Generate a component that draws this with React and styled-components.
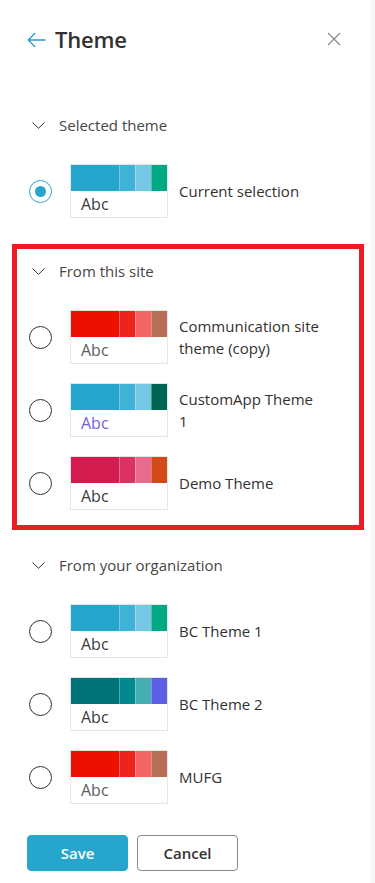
import React, { useState } from 'react';
import styled, { createGlobalStyle } from 'styled-components';

const GlobalStyle = createGlobalStyle`
  html, body {
    margin: 0;
    padding: 0;
    background: #f8f8f8;
  }
  body {
    font-family: "Open Sans", "Noto Sans", "Liberation Sans", sans-serif;
    color: #323130;
  }
`;

const blue = ['#27a6cd', '#40b1d7', '#76c7e3'];

const sections = [
  {
    title: 'Selected theme',
    items: [
      { id: 'current', name: 'Current selection', colors: [...blue, '#00a884'], ink: '#3b3a39' },
    ],
  },
  {
    title: 'From this site',
    highlight: true,
    items: [
      { id: 'comm', name: 'Communication site theme (copy)', colors: ['#eb1000', '#ee231d', '#f46464', '#b76e55'], ink: '#605e5c' },
      { id: 'custom', name: 'CustomApp Theme 1', colors: [...blue, '#006452'], ink: '#7160e8' },
      { id: 'demo', name: 'Demo Theme', colors: ['#d31b4f', '#db3264', '#e86a8c', '#d24a18'], ink: '#3b3a39' },
    ],
  },
  {
    title: 'From your organization',
    items: [
      { id: 'bc1', name: 'BC Theme 1', colors: [...blue, '#00a884'], ink: '#3b3a39' },
      { id: 'bc2', name: 'BC Theme 2', colors: ['#007378', '#008a8f', '#45aeb1', '#5c5fe6'], ink: '#3b3a39' },
      { id: 'mufg', name: 'MUFG', colors: ['#eb1000', '#ee231d', '#f46464', '#b76e55'], ink: '#605e5c' },
    ],
  },
];

function ThemeRow({ item, checked, onSelect }) {
  return (
    <Row onClick={() => onSelect(item.id)}>
      <Radio $checked={checked} />
      <Swatch>
        <Bar>
          {item.colors.map((c, i) => (
            <Segment key={i} $color={c} $main={i === 0} />
          ))}
        </Bar>
        <Sample $ink={item.ink}>Abc</Sample>
      </Swatch>
      <Label>{item.name}</Label>
    </Row>
  );
}

function Section({ section, selected, onSelect }) {
  return (
    <>
      <SectionHeader>
        <svg width="13" height="7" viewBox="0 0 13 7">
          <polyline points="0.5,0.5 6.5,6.3 12.5,0.5" fill="none" stroke="#323130" strokeWidth="1" />
        </svg>
        <span>{section.title}</span>
      </SectionHeader>
      <Rows>
        {section.items.map((item) => (
          <ThemeRow key={item.id} item={item} checked={selected === item.id} onSelect={onSelect} />
        ))}
      </Rows>
    </>
  );
}

export default function App() {
  const [selected, setSelected] = useState('current');

  return (
    <>
      <GlobalStyle />
      <Panel>
        <Header>
          <TitleGroup>
            <svg width="19" height="16" viewBox="0 0 19 16">
              <path d="M18.5 8H1.2M8.2 1L1.2 8l7 7" fill="none" stroke="#27a0cc" strokeWidth="1.3" />
            </svg>
            <Title>Theme</Title>
          </TitleGroup>
          <svg width="14" height="14" viewBox="0 0 14 14">
            <path d="M1 1l12 12M13 1L1 13" fill="none" stroke="#8a8886" strokeWidth="1.2" />
          </svg>
        </Header>

        {sections.map((s) =>
          s.highlight ? (
            <Highlight key={s.title}>
              <Section section={s} selected={selected} onSelect={setSelected} />
            </Highlight>
          ) : (
            <Block key={s.title}>
              <Section section={s} selected={selected} onSelect={setSelected} />
            </Block>
          )
        )}

        <Actions>
          <Button $primary>Save</Button>
          <Button>Cancel</Button>
        </Actions>
      </Panel>
    </>
  );
}

const Panel = styled.div`
  width: 370px;
  min-height: 883px;
  box-sizing: border-box;
  padding: 24px 17px 12px 27px;
  background: #ffffff;
`;

const Header = styled.div`
  display: flex;
  align-items: center;
  justify-content: space-between;
  height: 30px;
  padding-right: 12px;
  margin-bottom: 61px;
`;

const TitleGroup = styled.div`
  display: flex;
  align-items: center;
  gap: 9px;
  svg {
    margin-top: 1px;
  }
`;

const Title = styled.h1`
  margin: 0;
  font-size: 22px;
  font-weight: 600;
  line-height: 30px;
  color: #323130;
  letter-spacing: -0.2px;
`;

const Block = styled.div`
  & + & {
    margin-top: 27px;
  }
`;

const Highlight = styled.div`
  margin: 26px -11px 25px -15px;
  padding: 12px 6px 15px 10px;
  border: 5px solid #ed1c24;
`;

const SectionHeader = styled.div`
  display: flex;
  align-items: center;
  height: 20px;
  font-size: 15px;
  color: #484644;
  svg {
    margin: 0 14px 0 5px;
  }
`;

const Rows = styled.div`
  display: flex;
  flex-direction: column;
  gap: 19px;
  padding-top: 29px;
`;

const Row = styled.div`
  display: flex;
  align-items: center;
  cursor: pointer;
`;

const Radio = styled.span`
  position: relative;
  flex: none;
  width: 23px;
  height: 23px;
  box-sizing: border-box;
  margin: 0 18px 0 2px;
  border-radius: 50%;
  border: 1px solid ${(p) => (p.$checked ? '#27a6cd' : '#323130')};
  &::after {
    content: '';
    display: ${(p) => (p.$checked ? 'block' : 'none')};
    position: absolute;
    left: 5px;
    top: 5px;
    width: 11px;
    height: 11px;
    border-radius: 50%;
    background: #27a6cd;
  }
`;

const Swatch = styled.div`
  flex: none;
  width: 98px;
  height: 54px;
  box-sizing: border-box;
  border: 1px solid #e5e5e5;
  display: flex;
  flex-direction: column;
`;

const Bar = styled.div`
  display: flex;
  height: 26px;
`;

const Segment = styled.div`
  width: ${(p) => (p.$main ? '48px' : '16px')};
  background: ${(p) => p.$color};
  box-shadow: ${(p) => (p.$main ? 'none' : 'inset 1px 0 0 rgba(255,255,255,0.3)')};
`;

const Sample = styled.div`
  height: 26px;
  line-height: 26px;
  padding-left: 10px;
  font-size: 16px;
  color: ${(p) => p.$ink};
`;

const Label = styled.div`
  margin-left: 11px;
  width: 146px;
  font-size: 15px;
  line-height: 22px;
  color: #323130;
`;

const Actions = styled.div`
  display: flex;
  gap: 9px;
  margin-top: 31px;
`;

const Button = styled.button`
  width: 101px;
  height: 36px;
  box-sizing: border-box;
  border-radius: 4px;
  border: 1px solid ${(p) => (p.$primary ? '#27a6cd' : '#8a8886')};
  background: ${(p) => (p.$primary ? '#27a6cd' : '#ffffff')};
  color: ${(p) => (p.$primary ? '#ffffff' : '#323130')};
  font-family: "Open Sans", "Noto Sans", "Liberation Sans", sans-serif;
  font-size: 15px;
  font-weight: 600;
  cursor: pointer;
`;
